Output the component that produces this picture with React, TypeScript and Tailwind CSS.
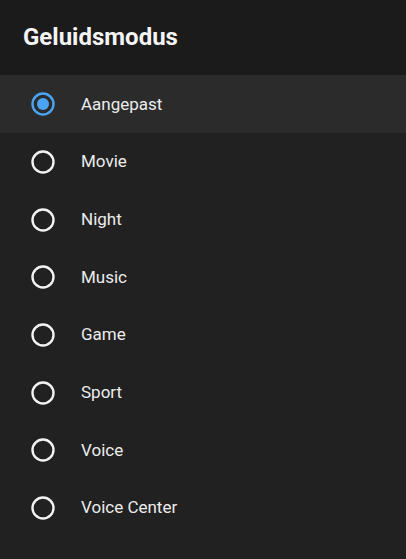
import React, { useState } from 'react'

const modes = ['Aangepast', 'Movie', 'Night', 'Music', 'Game', 'Sport', 'Voice', 'Voice Center']

const Radio: React.FC<{ checked: boolean }> = ({ checked }) => (
  <svg width="26" height="26" viewBox="0 0 26 26" className="shrink-0">
    <circle cx="13" cy="13" r="10.5" fill="none" stroke={checked ? '#4ba3f3' : '#f2f2f2'} strokeWidth="2.4" />
    {checked && <circle cx="13" cy="13" r="6" fill="#4ba3f3" />}
  </svg>
)

export default function App() {
  const [selected, setSelected] = useState('Aangepast')

  return (
    <div className="w-[406px] h-[559px] bg-[#212121] overflow-hidden" style={{ fontFamily: 'Roboto, "Liberation Sans", sans-serif' }}>
      {/* Title */}
      <div className="h-[75px] bg-[#1b1b1b] flex items-center px-[23px] pb-[1px]">
        <h1 className="text-[24px] font-bold text-[#f4f4f4]">Geluidsmodus</h1>
      </div>

      {/* Options */}
      <div className="flex flex-col">
        {modes.map(mode => (
          <button
            key={mode}
            onClick={() => setSelected(mode)}
            className={`h-[57.7px] flex items-center pl-[30px] pt-[1px] gap-[25px] text-left ${
              selected === mode ? 'bg-[#2b2b2b]' : ''
            }`}
          >
            <Radio checked={selected === mode} />
            <span className="text-[17px] text-[#ececec]">{mode}</span>
          </button>
        ))}
      </div>
    </div>
  )
}
